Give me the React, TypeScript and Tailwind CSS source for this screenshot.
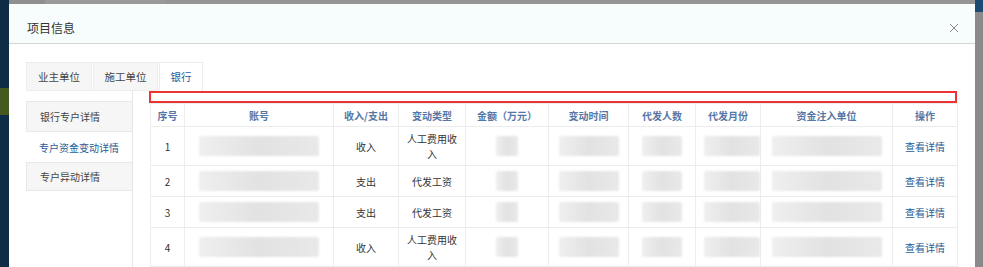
import React from "react";

const font = { fontFamily: '"Microsoft YaHei", "Noto Sans CJK SC", "Noto Sans", sans-serif' };

type Row = { no: number; dir: string; kind: string; tall?: boolean };

const rows: Row[] = [
  { no: 1, dir: "收入", kind: "人工费用收入", tall: true },
  { no: 2, dir: "支出", kind: "代发工资" },
  { no: 3, dir: "支出", kind: "代发工资" },
  { no: 4, dir: "收入", kind: "人工费用收入", tall: true },
];

const headers = ["序号", "账号", "收入/支出", "变动类型", "金额（万元）", "变动时间", "代发人数", "代发月份", "资金注入单位", "操作"];
const widths = ["w-[34px]", "w-[149px]", "w-[65px]", "w-[67px]", "w-[83px]", "w-[80px]", "w-[67px]", "w-[65px]", "w-[132px]", "w-[65px]"];

// masked data in the screenshot: soft grey mosaic blocks
function Mask({ w }: { w: string }) {
  return (
    <div className={`mx-auto h-[20px] ${w} rounded-[2px] bg-gradient-to-r from-[#efefef] via-[#e2e2e2] to-[#e9e9e9] blur-[1px]`} />
  );
}

function CloseIcon() {
  return (
    <svg width="10" height="10" viewBox="0 0 10 10" fill="none">
      <path d="M1 1L9 9M9 1L1 9" stroke="#8a8a8a" strokeWidth="1" />
    </svg>
  );
}

export default function App() {
  const td = "border border-[#ececec] px-2 py-[4px] text-center align-middle";
  return (
    <div className="flex h-[267px] w-[983px] overflow-hidden bg-[#8d8d8d] text-[10px] text-[#333]" style={font}>
      {/* page behind the dialog */}
      <div className="flex w-[9px] flex-col bg-[#0f2c47]">
        <div className="h-[88px]" />
        <div className="h-[27px] bg-[#45591f]" />
      </div>

      <div className="flex flex-1 flex-col">
        <div className="flex h-[5px]">
          <div className="w-[36px] bg-[#8f8f8f]" />
          <div className="w-[120px] bg-[#999999]" />
          <div className="flex-1 bg-[#949494]" />
        </div>

        {/* dialog */}
        <div className="flex flex-1 flex-col bg-white">
          <div className="flex h-[40px] items-center justify-between border-b border-[#d4d4d4] bg-[#f7fdfd] pl-[18px] pr-[16px] pt-[8px]">
            <span className="text-[12px] text-[#333]">项目信息</span>
            <CloseIcon />
          </div>

          <div className="flex flex-1 flex-col pl-[17px] pt-[18px]">
            {/* tabs */}
            <div className="flex h-[29px] gap-[1px]">
              <div className="flex w-[66px] items-center justify-center border border-[#ececec] bg-[#f6f6f6] text-[10.5px] text-[#444]">业主单位</div>
              <div className="flex w-[65px] items-center justify-center border border-[#ececec] bg-[#f6f6f6] text-[10.5px] text-[#444]">施工单位</div>
              <div className="flex w-[44px] items-center justify-center border border-b-0 border-[#ececec] bg-white text-[10.5px] text-[#1f5b96]">银行</div>
            </div>

            <div className="flex flex-1">
              {/* left nav */}
              <div className="flex w-[107px] flex-col border-r border-[#e6e6e6] pt-[10px]">
                <div className="flex h-[31px] items-center border border-r-0 border-[#e8e8e8] bg-[#f6f6f6] pl-[13px] text-[#444]">银行专户详情</div>
                <div className="flex h-[30px] items-center bg-white pl-[13px] text-[#1f5b96]">专户资金变动详情</div>
                <div className="flex h-[29px] items-center border border-r-0 border-[#e8e8e8] bg-[#f6f6f6] pl-[13px] text-[#444]">专户异动详情</div>
              </div>

              {/* content */}
              <div className="ml-[16px] flex flex-col">
                <div className="h-[12px] w-[808px] border-2 border-[#ec3434]" />
                <table className="ml-[1px] w-[806px] table-fixed border-collapse">
                  <colgroup>
                    {widths.map((w, i) => (
                      <col key={i} className={w} />
                    ))}
                  </colgroup>
                  <thead>
                    <tr className="h-[23px]">
                      {headers.map((h) => (
                        <th key={h} className="border border-[#ececec] px-1 text-center font-bold text-[#5676a6]">
                          {h}
                        </th>
                      ))}
                    </tr>
                  </thead>
                  <tbody>
                    {rows.map((r) => (
                      <tr key={r.no} className={r.tall ? "h-[39px]" : "h-[31px]"}>
                        <td className={td}>{r.no}</td>
                        <td className={td}><Mask w="w-[120px]" /></td>
                        <td className={td}>{r.dir}</td>
                        <td className={`${td} leading-[15px]`}>{r.kind}</td>
                        <td className={td}><Mask w="w-[22px]" /></td>
                        <td className={td}><Mask w="w-[60px]" /></td>
                        <td className={td}><Mask w="w-[40px]" /></td>
                        <td className={td}><Mask w="w-[56px]" /></td>
                        <td className={td}><Mask w="w-[110px]" /></td>
                        <td className={`${td} text-[#1f5b96]`}>查看详情</td>
                      </tr>
                    ))}
                  </tbody>
                </table>
              </div>
            </div>
          </div>
        </div>
      </div>

      <div className="flex w-[8px] flex-col bg-[#8a8a8a]">
        <div className="h-[12px] bg-[#1d4a73]" />
      </div>
    </div>
  );
}
